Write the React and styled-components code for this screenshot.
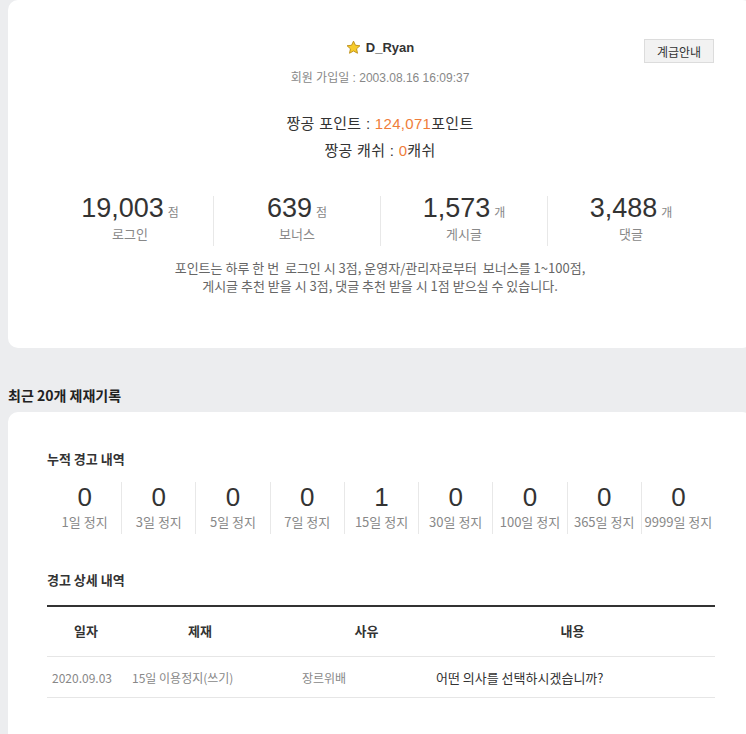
import React from "react";
import styled, { createGlobalStyle } from "styled-components";

const GlobalStyle = createGlobalStyle`
  html, body {
    margin: 0;
    padding: 0;
    background: #ecedef;
    overflow-x: hidden;
  }
  body {
    font-family: "Liberation Sans", "Noto Sans CJK KR", sans-serif;
    color: #333;
  }
`;

const Page = styled.div`
  padding-left: 8px;
  width: 744px;
`;

const Card = styled.section`
  background: #ffffff;
  border-radius: 10px;
  box-sizing: border-box;
  width: 744px;
  padding: ${props => props.$pad || "0 38px"};
  min-height: ${props => props.$minHeight || "auto"};
`;

const ProfileTop = styled.div`
  position: relative;
  padding-top: 38px;
  text-align: center;
`;

const Nick = styled.div`
  display: flex;
  justify-content: center;
  align-items: center;
  gap: 5px;
  font-size: 13px;
  font-weight: 700;
  color: #333;
  height: 18px;
`;

const GuideButton = styled.button`
  position: absolute;
  right: 0;
  top: 39px;
  width: 70px;
  height: 24px;
  background: #f2f2f2;
  border: 1px solid #dcdcdc;
  font-family: "Noto Sans CJK KR", sans-serif;
  font-size: 12px;
  color: #333;
  padding: 0;
`;

const JoinDate = styled.div`
  margin-top: 14px;
  font-size: 12px;
  color: #888;
  line-height: 16px;
`;

const PointBlock = styled.div`
  margin-top: 24px;
  text-align: center;
  font-size: 15px;
  letter-spacing: 0.3px;
  line-height: 27px;
  color: #333;
`;

const Accent = styled.span`
  color: #ef7d3a;
`;

const StatRow = styled.div`
  display: grid;
  grid-template-columns: repeat(${props => props.$cols}, 1fr);
  margin-top: ${props => props.$top || "0"};
`;

const StatCell = styled.div`
  display: flex;
  flex-direction: column;
  align-items: center;
  border-left: 1px solid ${props => (props.$first ? "transparent" : "#e8e8e8")};
`;

const StatValue = styled.div`
  display: flex;
  align-items: baseline;
  gap: 4px;
  font-size: ${props => props.$size || "27px"};
  line-height: ${props => props.$line || "24px"};
  color: #333;
`;

const Unit = styled.span`
  font-family: "Noto Sans CJK KR", sans-serif;
  font-size: 12px;
  color: #888;
`;

const StatLabel = styled.div`
  font-family: "Noto Sans CJK KR", sans-serif;
  font-size: 13px;
  color: #888;
  line-height: 18px;
  margin-top: ${props => props.$top || "1px"};
  padding-bottom: 3px;
`;

const Notice = styled.p`
  margin: 13px 0 0;
  padding-bottom: 53px;
  text-align: center;
  font-family: "Noto Sans CJK KR", sans-serif;
  font-size: 13px;
  line-height: 18px;
  color: #666;
`;

const SectionTitle = styled.h2`
  margin: 0;
  padding: 38px 0 7px;
  font-family: "Noto Sans CJK KR", sans-serif;
  font-size: 14px;
  font-weight: 700;
  line-height: 19px;
  color: #222;
`;

const SubTitle = styled.h3`
  margin: 0;
  font-family: "Noto Sans CJK KR", sans-serif;
  font-size: 13px;
  font-weight: 700;
  line-height: 16px;
  color: #333;
  padding-top: ${props => props.$top || "0"};
`;

const Table = styled.div`
  margin-top: 17px;
  border-top: 2px solid #333;
  font-family: "Noto Sans CJK KR", sans-serif;
`;

const TableRow = styled.div`
  display: grid;
  grid-template-columns: 78px 150px 155px 1fr;
  align-items: center;
  height: ${props => (props.$head ? "49px" : "40px")};
  border-bottom: 1px solid #e6e6e6;
`;

const HeadCell = styled.div`
  text-align: center;
  font-size: 13px;
  font-weight: 700;
  color: #333;
  padding-left: ${props => props.$pl || "0"};
  margin-top: -2px;
`;

const Cell = styled.div`
  font-size: ${props => props.$size || "12px"};
  color: ${props => props.$color || "#888"};
  padding-left: ${props => props.$pl || "0"};
  white-space: nowrap;
`;

const Star = () => (
  <svg width="15" height="15" viewBox="0 0 24 24">
    <path
      d="M12 1.8l3.1 6.6 7.2.8-5.4 4.9 1.5 7.1L12 17.6l-6.4 3.6 1.5-7.1L1.7 9.2l7.2-.8z"
      fill="#f7cb2b"
      stroke="#b98a12"
      strokeWidth="1.4"
      strokeLinejoin="round"
    />
  </svg>
);

const stats = [
  { value: "19,003", unit: "점", label: "로그인" },
  { value: "639", unit: "점", label: "보너스" },
  { value: "1,573", unit: "개", label: "게시글" },
  { value: "3,488", unit: "개", label: "댓글" },
];

const warnings = [
  ["0", "1일 정지"],
  ["0", "3일 정지"],
  ["0", "5일 정지"],
  ["0", "7일 정지"],
  ["1", "15일 정지"],
  ["0", "30일 정지"],
  ["0", "100일 정지"],
  ["0", "365일 정지"],
  ["0", "9999일 정지"],
];

export default function App() {
  return (
    <>
      <GlobalStyle />
      <Page>
        <Card>
          <ProfileTop>
            <Nick>
              <Star />
              <span>D_Ryan</span>
            </Nick>
            <GuideButton>계급안내</GuideButton>
            <JoinDate>회원 가입일 : 2003.08.16 16:09:37</JoinDate>
          </ProfileTop>
          <PointBlock>
            <div>
              짱공 포인트 : <Accent>124,071</Accent>포인트
            </div>
            <div>
              짱공 캐쉬 : <Accent>0</Accent>캐쉬
            </div>
          </PointBlock>
          <StatRow $cols={4} $top="32px">
            {stats.map((s, i) => (
              <StatCell key={s.label} $first={i === 0}>
                <StatValue>
                  {s.value}
                  <Unit>{s.unit}</Unit>
                </StatValue>
                <StatLabel>{s.label}</StatLabel>
              </StatCell>
            ))}
          </StatRow>
          <Notice>
            포인트는 하루 한 번 &nbsp;로그인 시 3점, 운영자/관리자로부터 &nbsp;보너스를 1~100점,
            <br />
            게시글 추천 받을 시 3점, 댓글 추천 받을 시 1점 받으실 수 있습니다.
          </Notice>
        </Card>

        <SectionTitle>최근 20개 제재기록</SectionTitle>

        <Card $pad="0 37px 0 39px" $minHeight="340px">
          <SubTitle $top="39px">누적 경고 내역</SubTitle>
          <StatRow $cols={9} $top="15px">
            {warnings.map(([n, label], i) => (
              <StatCell key={label} $first={i === 0}>
                <StatValue $size="26px" $line="30px">
                  {n}
                </StatValue>
                <StatLabel $top="1px">{label}</StatLabel>
              </StatCell>
            ))}
          </StatRow>
          <SubTitle $top="38px">경고 상세 내역</SubTitle>
          <Table>
            <TableRow $head>
              <HeadCell>일자</HeadCell>
              <HeadCell>제재</HeadCell>
              <HeadCell $pl="28px">사유</HeadCell>
              <HeadCell>내용</HeadCell>
            </TableRow>
            <TableRow>
              <Cell $pl="5px">2020.09.03</Cell>
              <Cell $pl="7px">15일 이용정지(쓰기)</Cell>
              <Cell $pl="27px">장르위배</Cell>
              <Cell $pl="6px" $color="#333" $size="13px">
                어떤 의사를 선택하시겠습니까?
              </Cell>
            </TableRow>
          </Table>
        </Card>
      </Page>
    </>
  );
}
